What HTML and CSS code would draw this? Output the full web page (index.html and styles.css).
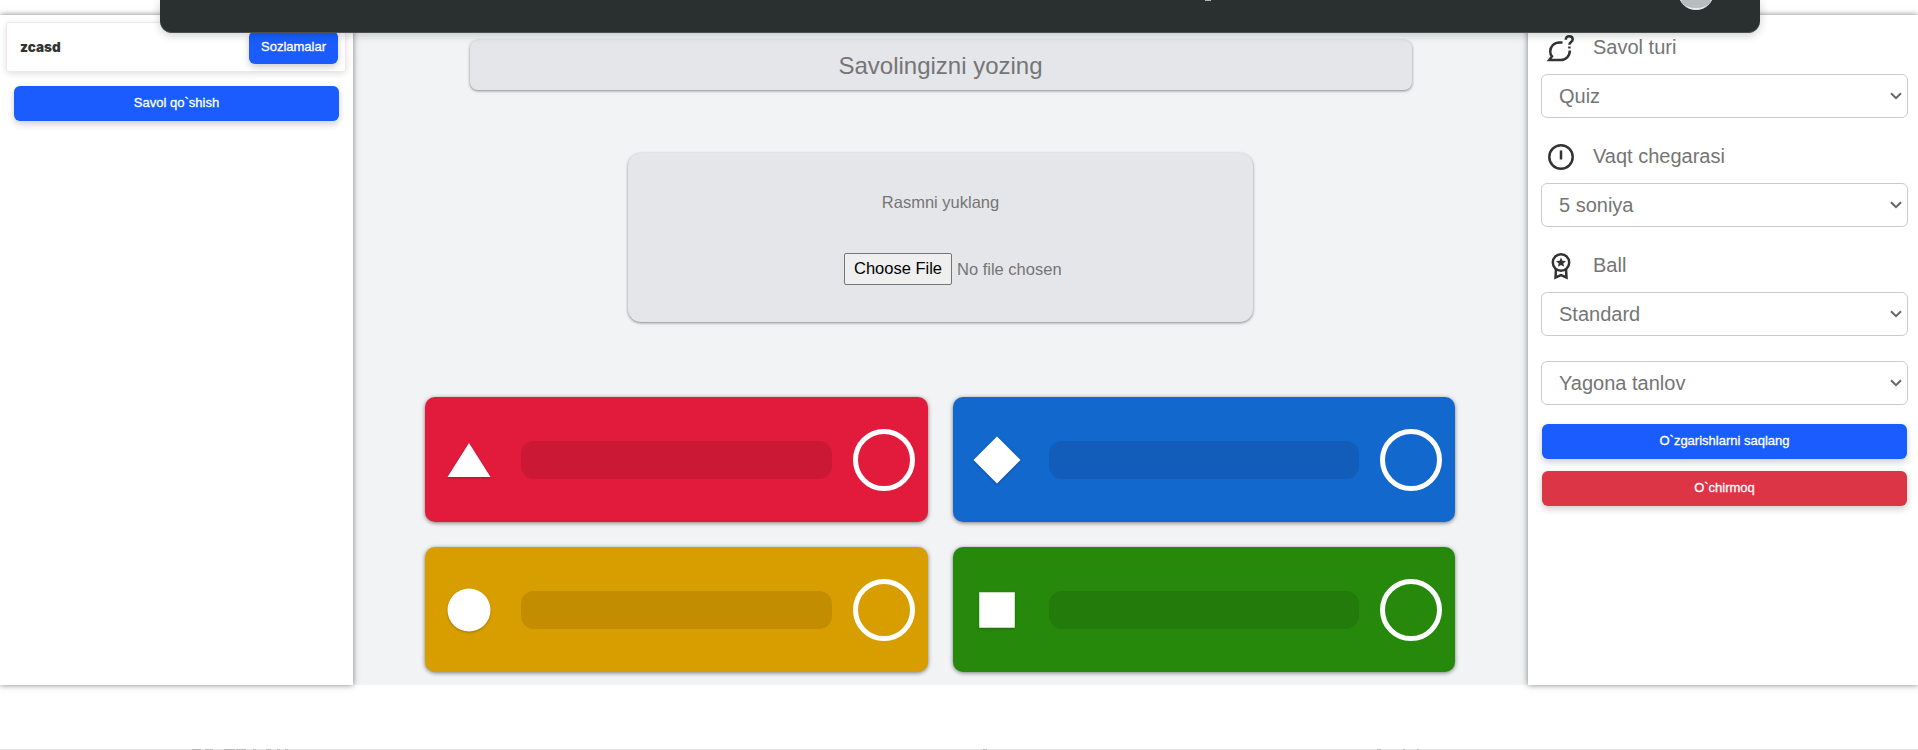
FILE: index.html
```html
<!DOCTYPE html>
<html lang="uz">
<head>
<meta charset="utf-8">
<title>Quiz</title>
<link rel="stylesheet" href="styles.css">
</head>
<body>
<header class="topbar"><span class="topbar-mark"></span>
<svg class="avatar" viewBox="0 0 36 36"><circle cx="18" cy="18" r="18" fill="#e9eaeb"/><path d="M3 28Q5 21 18 21T33 28Q28 34 18 34T3 28Z" fill="#b9bcbe"/></svg>
</header>
<main class="layout">
<aside class="left">
<div class="quiz-head"><span class="quiz-name">zcasd</span><button class="btn btn-settings">Sozlamalar</button></div>
<button class="btn btn-add">Savol qo`shish</button>
</aside>
<section class="editor">
<input class="question" type="text" placeholder="Savolingizni yozing">
<div class="upload"><p class="upload-label">Rasmni yuklang</p>
<div class="file"><button class="file-btn">Choose File</button><span>No file chosen</span></div></div>
<div class="answers">
<div class="answer red"><svg class="shape" viewBox="0 0 48 48"><path d="M24 7L45.500 41H2.500Z"/></svg><div class="field"></div><div class="ring"></div></div>
<div class="answer blue"><svg class="shape" viewBox="0 0 48 48"><path d="M24 .5L47.500 24L24 47.500L.5 24Z"/></svg><div class="field"></div><div class="ring"></div></div>
<div class="answer yellow"><svg class="shape" viewBox="0 0 48 48"><circle cx="24" cy="24" r="21.500"/></svg><div class="field"></div><div class="ring"></div></div>
<div class="answer green"><svg class="shape" viewBox="0 0 48 48"><path d="M6.200 6.200H41.800V41.800H6.200Z"/></svg><div class="field"></div><div class="ring"></div></div>
</div>
</section>
<aside class="right">
<div class="label"><svg class="icon" viewBox="0 0 26 26"><path d="M14.500 7.500H11.500C6 7.500 2.200 11.500 2.200 16.500c0 2 .6 3.500 1.800 4.900L1.200 25H12.500c5.500 0 9.300-4 9.300-9.500"/><path d="M17.800 4.800c0-2.200 1.300-3.600 3.300-3.600s3.600 1.300 3.600 3.200c0 2.600-3.300 2.700-3.300 5.400M21.400 11.500v2"/></svg><span>Savol turi</span></div>
<div class="select"><span>Quiz</span><svg class="chev" viewBox="0 0 12 8"><path d="M1 1.200L6 6.200L11 1.200"/></svg></div>
<div class="label"><svg class="icon" viewBox="0 0 26 26"><circle cx="13" cy="13" r="11.700"/><path d="M13 6.500v9"/></svg><span>Vaqt chegarasi</span></div>
<div class="select"><span>5 soniya</span><svg class="chev" viewBox="0 0 12 8"><path d="M1 1.200L6 6.200L11 1.200"/></svg></div>
<div class="label"><svg class="icon" viewBox="0 0 26 26"><circle cx="13" cy="9.500" r="8.200"/><path d="M8 16L7.500 24.500L13 22L18.500 24.500L18 16"/><path class="solid" d="M13 4.500l1.400 3.200 3.600.4-2.700 2.300.8 3.400-3.100-1.800-3.100 1.800.8-3.400L8 8.100l3.600-.4z"/></svg><span>Ball</span></div>
<div class="select"><span>Standard</span><svg class="chev" viewBox="0 0 12 8"><path d="M1 1.200L6 6.200L11 1.200"/></svg></div>
<div class="select"><span>Yagona tanlov</span><svg class="chev" viewBox="0 0 12 8"><path d="M1 1.200L6 6.200L11 1.200"/></svg></div>
<button class="btn btn-save">O`zgarishlarni saqlang</button>
<button class="btn btn-delete">O`chirmoq</button>
</aside>
</main>
<footer class="footer"></footer>
</body>
</html>
```
FILE: styles.css
```css
* { box-sizing: border-box; }
body { margin: 0; height: 750px; overflow: hidden; background: #fff; font-family: "Liberation Sans", Arial, sans-serif; color: #757575; display: flex; flex-direction: column; padding-top: 15px; }
button, input { font-family: inherit; }
.topbar { position: absolute; z-index: 5; top: 0; left: 160px; width: 1600px; height: 33px; background: #2a302f; border-bottom: 1px solid #4a5050; border-radius: 0 0 12px 12px; box-shadow: 0 2px 10px rgba(0,0,0,.2); }
.topbar-mark { position: absolute; left: 1045px; top: 0; width: 6px; height: 1px; background: #b5b8b8; }
.avatar { position: absolute; left: 1518px; top: -26px; width: 36px; height: 36px; }
.layout { display: flex; height: 670px; flex: none; }
.left, .right { position: relative; background: #fff; box-shadow: 0 0 6px rgba(0,0,0,.5); display: flex; flex-direction: column; }
.left { width: 353px; padding: 7px 7px 0 6px; }
.right { width: 390px; padding: 14px 10px 0 13px; }
.editor { flex: 1; background: #f2f3f5; display: flex; flex-direction: column; align-items: center; padding-top: 25px; }
.quiz-head { height: 50px; display: flex; align-items: center; justify-content: space-between; padding: 0 7px 0 13px; border: 1px solid #f5e6e6; border-radius: 3px; box-shadow: 0 2px 6px rgba(0,0,0,.12); }
.quiz-name { font: 900 13.500px Inter, sans-serif; color: #333; }
.btn { border: 0; border-radius: 6px; background: #1a5cff; color: #fff; font: 500 13px "Liberation Sans", Arial, sans-serif; -webkit-text-stroke: .3px #fff; padding: 0 0 2px; box-shadow: 0 3px 7px rgba(0,0,0,.2); }
.btn-settings { width: 89px; height: 33px; }
.btn-add { height: 35px; margin: 14px 7px 0 8px; }
.question { width: 942px; height: 50px; border: 0; border-radius: 8px; background: #e5e6ea; box-shadow: 0 1px 3px rgba(0,0,0,.45); text-align: center; font-size: 24px; padding: 2px 0 0; }
.question::placeholder { color: #757575; }
.upload { width: 625px; height: 169px; margin-top: 63px; border-radius: 13px; background: #e5e6ea; box-shadow: 0 1px 3px rgba(0,0,0,.45); text-align: center; padding-top: 39px; font-size: 16.500px; }
.upload-label { margin: 0; line-height: 20px; }
.file { display: flex; align-items: center; gap: 5px; margin: 41px 0 0 216px; }
.file-btn { width: 108px; height: 32px; border: 1px solid #767676; border-radius: 2px; background: #efefef; font-size: 16.500px; padding: 0 0 2px; color: #000; }
.answers { display: grid; grid-template-columns: 503px 502px; grid-auto-rows: 125px; gap: 25px; margin: 75px 1px 0 0; }
.answer { display: flex; align-items: center; padding: 0 13px 0 20px; border-radius: 10px; box-shadow: 0 1px 4px rgba(0,0,0,.5); }
.red { background: #e21b3c; }
.blue { background: #1368ce; }
.yellow { background: #d89e00; }
.green { background: #26890c; }
.shape { width: 48px; height: 48px; fill: #fff; filter: drop-shadow(0 1px 1px rgba(0,0,0,.25)); }
.field { flex: 1; height: 38px; margin: 0 21px 0 28px; border-radius: 13px; background: rgba(0,0,0,.1); }
.ring { width: 62px; height: 62px; border: 5px solid #fff; border-radius: 50%; }
.label { display: flex; align-items: center; gap: 19px; height: 37px; padding-left: 7px; font-size: 20px; }
.icon { width: 26px; height: 26px; fill: none; stroke: #333; stroke-width: 2.500; overflow: visible; }
.icon .solid { fill: #333; stroke: none; }
.select { display: flex; align-items: center; justify-content: space-between; height: 44px; margin: 8px 0 20px; padding: 0 5px 0 17px; border: 1px solid #ccc; border-radius: 6px; font-size: 20px; }
.select + .select { margin: 5px 0 0; }
.chev { width: 12px; height: 8px; fill: none; stroke: #666; stroke-width: 2; }
.btn-save { height: 35px; margin: 19px 1px 12px; }
.btn-delete { height: 35px; margin: 0 1px; background: #dc3545; }
.footer { margin-top: 64px; height: 1px; flex: none; background: linear-gradient(90deg, transparent 192px, #bbb 192px 201px, transparent 201px 205px, #bbb 205px 213px, transparent 213px 224px, #bbb 224px 235px, transparent 235px 236px, #bbb 236px 246px, transparent 246px 253px, #bbb 253px 256px, transparent 256px 266px, #bbb 266px 271px, transparent 271px 277px, #bbb 277px 280px, transparent 280px 285px, #bbb 285px 288px, transparent 288px 983px, #bbb 983px 987px, transparent 987px 1377px, #bbb 1377px 1381px, transparent 1381px 1403px, #bbb 1403px 1405px, transparent 1405px 1417px, #bbb 1417px 1419px, transparent 1419px), #e5e5e5; }
```
